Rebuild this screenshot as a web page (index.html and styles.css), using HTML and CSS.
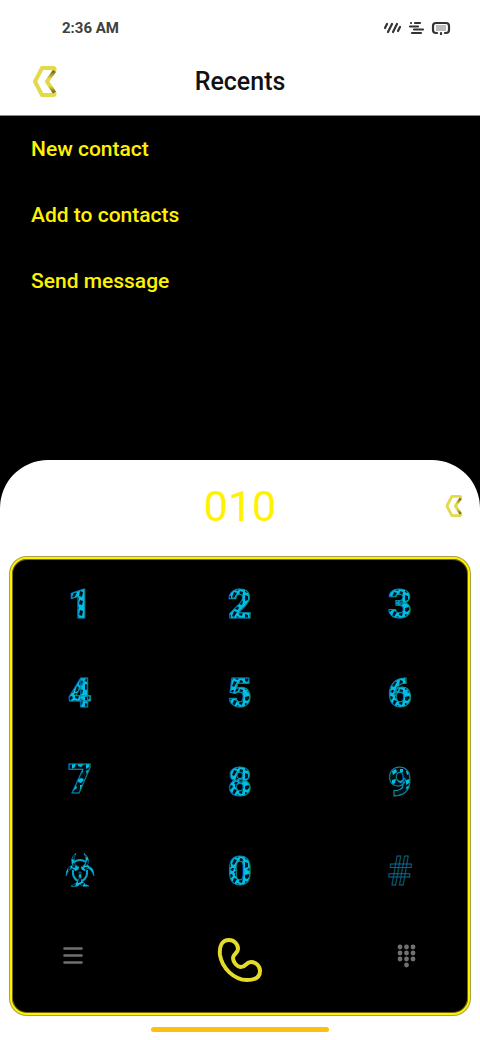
FILE: index.html
```html
<!DOCTYPE html>
<html lang="en">
<head>
<meta charset="utf-8">
<meta name="viewport" content="width=device-width, initial-scale=1">
<title>Recents</title>
<link rel="stylesheet" href="styles.css">
</head>
<body>
<svg class="defs" aria-hidden="true">
  <defs>
    <linearGradient id="fold" x1="0" y1="0" x2="0" y2="1">
      <stop offset="0" stop-color="#6b6410"/><stop offset=".35" stop-color="#e2d94a"/><stop offset=".7" stop-color="#e2d94a"/><stop offset="1" stop-color="#6b6410"/>
    </linearGradient>
    <pattern id="camo" width="17" height="19" patternUnits="userSpaceOnUse">
      <rect width="17" height="19" fill="#02bde6"/>
      <path fill="#001318" d="M1 2l4-1 1 2-3 3-2-1zM8 0l4 1-1 3-3-1zM13 4l3 1-1 5-3-1zM7 5l3 1-3 5-2-1zM1 8l3 1 0 4-3 1zM10 10l2 1-1 4-3 1zM5 14l2 0-1 3-3-1zM13 13l3 1-1 4-3-1zM8 17l3 0-1 2-3 0z"/>
    </pattern>
    <pattern id="camo-dark" width="14" height="16" patternUnits="userSpaceOnUse">
      <rect width="14" height="16" fill="#001014"/>
      <path fill="#02bde6" d="M0 1l4-1 2 2-3 3-3-1zM8 2l4-1-1 4-3 2zM2 7l3 0 0 3-3 2zM8 9l4-2 1 3-4 3z"/>
    </pattern>
    <symbol id="chevron" viewBox="0 0 24 31">
      <path d="M9 2h11q2 0 1.500 2L14 15.500l7.500 11.500q.5 2-1.500 2H9L2 15.500z" fill="none" stroke="#e2da4b" stroke-width="4" stroke-linejoin="round"/>
      <path d="M21.500 5L14 15.500l7.500 11" fill="none" stroke="url(#fold)" stroke-width="3.600"/>
    </symbol>
  </defs>
</svg>
<header class="top">
  <div class="status">
    <span class="time">2:36 AM</span>
    <svg class="status-icons" viewBox="0 0 70 14" aria-hidden="true">
      <g fill="none" stroke="#333" stroke-width="2.200" stroke-linecap="round">
        <path d="M3 7L5 3M6 11L10 3M11 11L15 3M16 10L18 6"/>
        <path d="M29 2h.01M33 2h5M28 5.500h8M32 8.500h9M30 12h9"/>
        <path d="M55 12h-1q-3 0-3-3V5q0-3 3-3h10q3 0 3 3v4q0 3-3 3h-1M59 13v-1"/>
      </g>
      <rect x="54" y="4" width="10" height="6" fill="#bbb"/>
    </svg>
  </div>
  <div class="title-bar">
    <button class="icon-button back" aria-label="Back"><svg viewBox="0 0 24 31"><use href="#chevron"/></svg></button>
    <h1 class="title">Recents</h1>
  </div>
</header>
<main class="content">
  <nav class="actions">
    <a class="action" href="#new">New contact</a>
    <a class="action" href="#add">Add to contacts</a>
    <a class="action" href="#message">Send message</a>
  </nav>
  <section class="sheet">
    <div class="entry">
      <output class="number">010</output>
      <button class="icon-button erase" aria-label="Delete digit"><svg viewBox="0 0 24 31"><use href="#chevron"/></svg></button>
    </div>
    <div class="panel">
      <div class="row">
        <button class="key"><svg viewBox="0 0 60 72"><text class="digit" x="30" y="50">1</text></svg></button>
        <button class="key"><svg viewBox="0 0 60 72"><text class="digit" x="30" y="50">2</text></svg></button>
        <button class="key"><svg viewBox="0 0 60 72"><text class="digit" x="30" y="50">3</text></svg></button>
      </div>
      <div class="row">
        <button class="key"><svg viewBox="0 0 60 72"><text class="digit" x="30" y="50">4</text></svg></button>
        <button class="key"><svg viewBox="0 0 60 72"><text class="digit" x="30" y="50">5</text></svg></button>
        <button class="key"><svg viewBox="0 0 60 72"><text class="digit" x="30" y="50">6</text></svg></button>
      </div>
      <div class="row">
        <button class="key"><svg viewBox="0 0 60 72"><text class="digit dark" x="30" y="47">7</text></svg></button>
        <button class="key"><svg viewBox="0 0 60 72"><text class="digit" x="30" y="50">8</text></svg></button>
        <button class="key"><svg viewBox="0 0 60 72"><text class="digit dark" x="30" y="50">9</text></svg></button>
      </div>
      <div class="row">
        <button class="key" aria-label="Star"><svg viewBox="-10 -15 60 72">
          <g fill="url(#camo)" stroke="#07a9cf" stroke-width=".5">
            <path d="M16 3Q8 10 14 17L18 20L19 17Q11 14 16 3zM24 3Q32 10 26 17L22 20L21 17Q29 14 24 3z"/>
            <path d="M6 26Q6 17 13 15L18 18L16 21L12 18Q8 20 6 26zM34 26Q34 17 27 15L22 18L24 21L28 18Q32 20 34 26z"/>
            <path d="M19 22h2v7q2 5 8 7q-6 2-9-2q-3 4-9 2q6-2 8-7z"/>
          </g>
          <path d="M14 12q6-4 12 0M13 20q-1 8 5 11M27 20q1 8-5 11" fill="none" stroke="#06a3c8" stroke-width="2"/>
        </svg></button>
        <button class="key"><svg viewBox="0 0 60 72"><text class="digit" x="30" y="50">0</text></svg></button>
        <button class="key"><svg viewBox="0 0 60 72"><text class="digit hash" x="30" y="50">#</text></svg></button>
      </div>
      <div class="row tools">
        <button class="key tool" aria-label="Menu"><svg viewBox="0 0 20 20"><path d="M1.500 2.500h17M1.500 9.500h17M1.500 16.500h17" stroke="#707070" stroke-width="2.600" stroke-linecap="round"/></svg></button>
        <button class="key call" aria-label="Call"><svg viewBox="0 0 46 46"><path d="M12 3C5 3 2 9 3 18C5 31 17 43 30 43C37 43 43 41 43 34C43 29 39 25 34 25C29 25 29 30 24 30C20 30 16 25 16 21C16 17 21 16 21 12C21 7 17 3 12 3z" fill="none" stroke="#e3dc28" stroke-width="4"/></svg></button>
        <button class="key tool pad" aria-label="Keypad"><svg viewBox="0 0 20 24"><path d="M3 3h.01M9.500 3h.01M16 3h.01M3 9h.01M9.500 9h.01M16 9h.01M3 15h.01M9.500 15h.01M16 15h.01M9.500 21h.01" stroke="#707070" stroke-width="4.800" stroke-linecap="round"/></svg></button>
      </div>
    </div>
    <div class="home-bar"></div>
  </section>
</main>
</body>
</html>
```
FILE: styles.css
```css
* { box-sizing: border-box; }

body {
  margin: 0;
  min-height: 100vh;
  display: flex;
  flex-direction: column;
  background: #000;
  font-family: Roboto, "Liberation Sans", sans-serif;
}

button {
  margin: 0;
  padding: 0;
  border: 0;
  background: none;
  font: inherit;
  cursor: pointer;
}

svg { display: block; }

.defs { position: absolute; width: 0; height: 0; }

.top {
  background: #fff;
  border-bottom: 1px solid #888;
}

.status {
  height: 56px;
  padding: 0 28px 0 62px;
  display: flex;
  align-items: center;
  justify-content: space-between;
}

.time {
  font-size: 15px;
  font-weight: 700;
  color: #404040;
}

.status-icons { width: 70px; height: 14px; }

.title-bar {
  height: 59px;
  padding: 0 32px 8px;
  display: grid;
  grid-template-columns: 26px 1fr 26px;
  align-items: center;
}

.title {
  margin: 0;
  font-size: 25px;
  font-weight: 500;
  text-align: center;
  color: #111;
}

.back svg { width: 26px; height: 31px; }

.content {
  flex: 1;
  display: flex;
  flex-direction: column;
  justify-content: space-between;
}

.actions { display: flex; flex-direction: column; }

.action {
  padding: 0 31px;
  font-size: 21px;
  font-weight: 500;
  line-height: 66px;
  color: #fff200;
  text-decoration: none;
}

.sheet {
  background: #fff;
  border-radius: 48px 48px 0 0;
}

.entry {
  height: 96px;
  padding: 0 16px 4px;
  display: grid;
  grid-template-columns: 20px 1fr 20px;
  align-items: center;
}

.number {
  grid-column: 2;
  font-size: 43px;
  text-align: center;
  color: #fff200;
}

.erase svg { width: 20px; height: 22px; }

.panel {
  margin: 1px 10px;
  padding: 0 28px;
  background: #000;
  border: 2px solid #fdf200;
  border-radius: 17px;
  box-shadow: inset 0 0 0 1px #6f6900, 0 0 0 1px #a8a040;
}

.row {
  height: 89px;
  display: flex;
  align-items: center;
  justify-content: space-between;
}

.key {
  width: 80px;
  height: 80px;
  display: grid;
  place-items: center;
}

.key svg { width: 60px; height: 72px; }

.digit {
  font-size: 41px;
  font-weight: 900;
  text-anchor: middle;
  fill: url(#camo);
  stroke: #078fb0;
  stroke-width: 1px;
}

.dark { fill: url(#camo-dark); }

.hash {
  font-weight: 700;
  fill: #000;
  stroke: #0b6480;
}

.tools { height: 98px; padding-bottom: 8px; }

.tool { width: 66px; padding-bottom: 8px; }

.tool svg { width: 20px; height: 20px; }

.pad svg { height: 24px; }

.call svg { width: 46px; height: 46px; }

.home-bar {
  width: 37%;
  height: 5px;
  margin: 12px auto 8px;
  border-radius: 3px;
  background: #ffbf10;
}
```
